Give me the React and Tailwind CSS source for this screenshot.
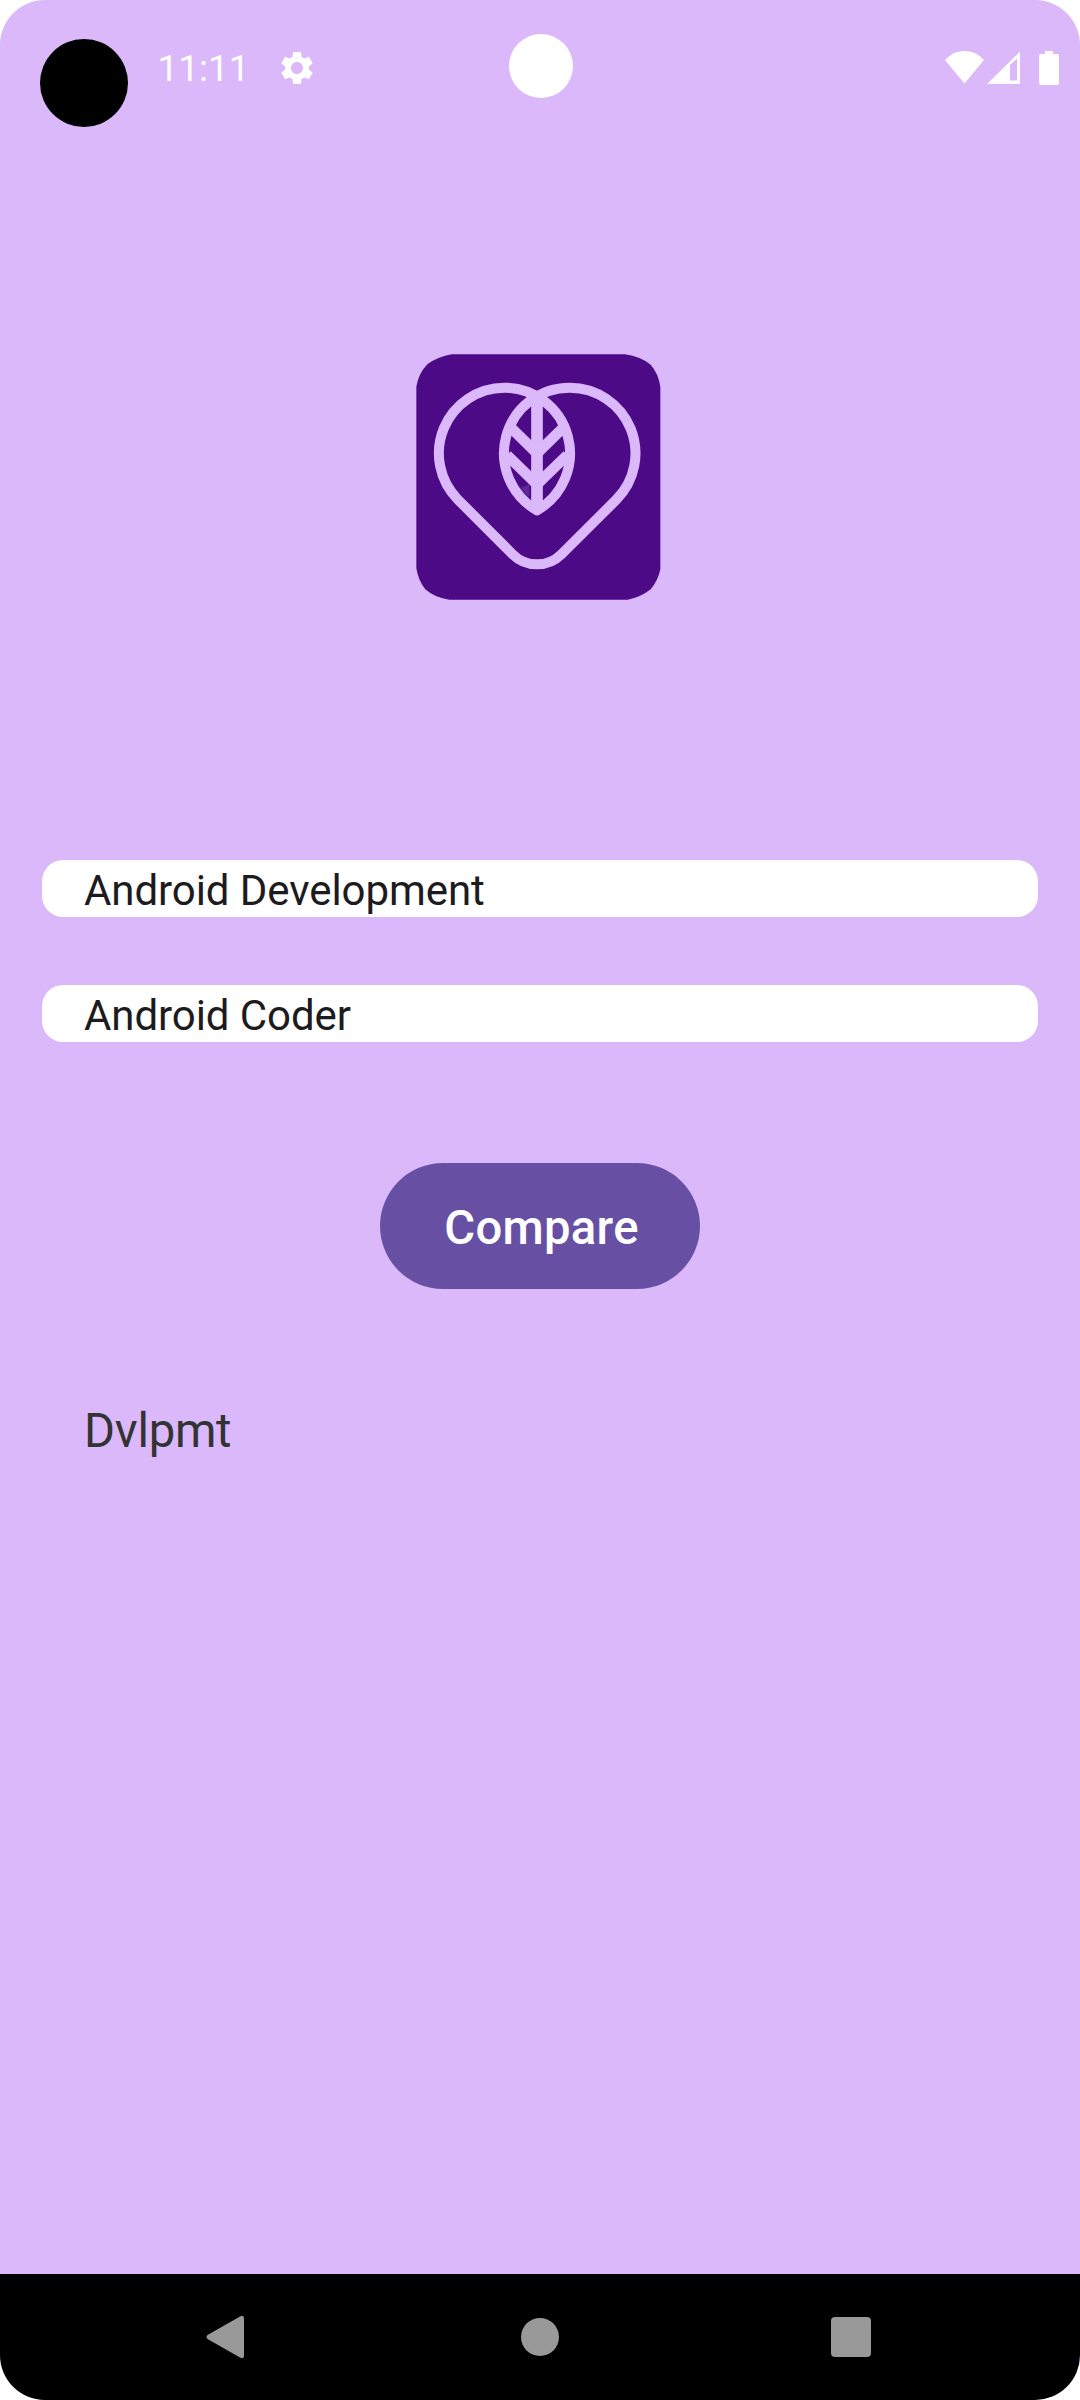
import { MdSettings } from "react-icons/md";

function StatusBar() {
  return (
    <header className="flex h-[137px] items-start text-white">
      <div className="mt-[39px] ml-[40px] size-[88px] shrink-0 rounded-full bg-black" />
      <span className="mt-[47px] ml-[29.5px] w-[88px] text-[37px] leading-[44px] whitespace-nowrap">11:11</span>
      <MdSettings className="mt-[48px] ml-[31.5px] size-[40px] shrink-0" />
      <div className="mt-[34px] ml-[192px] size-[64px] shrink-0 rounded-full bg-white" />
      <div className="mt-[51px] mr-[21px] ml-auto flex">
        <svg className="h-[34px] w-[39px]" viewBox="0 0 39 34" fill="currentColor">
          <path d="M0 9Q8 0 19.5 0T39 9L19.5 32.5Z" />
        </svg>
        <svg className="ml-[3px] h-[34px] w-[33px]" viewBox="0 0 33 34" fill="currentColor">
          <path fillRule="evenodd" d="M33 .5V33H0ZM23 14V29.5H30V7.5Z" />
        </svg>
        <svg className="ml-[19px] h-[34px] w-[20px]" viewBox="0 0 20 34" fill="currentColor">
          <path d="M6 0H14V3H18Q20 3 20 5V32Q20 34 18 34H2Q0 34 0 32V5Q0 3 2 3H6Z" />
        </svg>
      </div>
    </header>
  );
}

function Logo() {
  return (
    <svg className="h-[246px] w-[245px]" viewBox="48 42 735 738" fill="none">
      <path
        fill="#4d0a87"
        d="M155 43H675Q722 50 752 74Q775 100 781 140V688Q774 722 752 748Q722 772 683 779H148Q105 774 76 748Q55 722 49 685V140Q55 100 83 72Q115 50 155 43Z"
      />
      <path fill="#5d2794" d="M362 443L388 432V470L376 465Z" />
      <g stroke="#dab8fa" strokeWidth="30" strokeLinejoin="round">
        <path d="M411 511A197 197 0 0 0 313 143A197 197 0 0 0 174 479L337.500 642.500A104 104 0 0 0 484.500 642.500L649 479A197 197 0 0 0 510 143A197 197 0 0 0 411 511Z" />
        <path strokeWidth="35" d="M411 175V505" />
        <path strokeWidth="32" d="M325 255L411 340L498 255M321 345L411 433L502 345" />
      </g>
    </svg>
  );
}

function Field({ value }) {
  return (
    <div className="h-[57px] rounded-[21px] bg-white pt-[2px] pl-[42px] text-[42px] leading-[57px] tracking-[-0.07px] whitespace-nowrap text-[#1d1b20]">
      {value}
    </div>
  );
}

function NavBar() {
  return (
    <nav className="flex h-[126px] items-center bg-black text-[#999999]">
      <svg className="ml-[206px] h-[44px] w-[38px]" viewBox="0 0 38 44" fill="currentColor">
        <path d="M34 1.500Q38 -.5 38 3.500V40.500Q38 44.500 34 42.500L1.500 24Q-.5 22 1.500 20Z" />
      </svg>
      <div className="ml-[277px] size-[38px] rounded-full bg-[#999999]" />
      <div className="ml-[272px] size-[40px] rounded-[4px] bg-[#999999]" />
    </nav>
  );
}

export default function App() {
  return (
    <div className="h-[2400px] w-[1080px] bg-white">
      <div className="flex h-full flex-col overflow-hidden rounded-[45px] bg-[#dab8fa] font-['Roboto',sans-serif]">
        <StatusBar />
        <main className="flex flex-1 flex-col px-[42px]">
          <div className="mt-[217px] ml-[374px]">
            <Logo />
          </div>
          <div className="mt-[260px] flex flex-col gap-[68px]">
            <Field value="Android Development" />
            <Field value="Android Coder" />
          </div>
          <button className="mt-[121px] h-[126px] w-[320px] self-center rounded-full bg-[#6750a4] pt-[5px] pl-[3px] text-[47.25px] font-medium tracking-[0.3px] text-white">
            Compare
          </button>
          <p className="mt-[114px] pl-[42px] text-[47.25px] leading-[56px] tracking-[-0.25px] text-[#333333]">Dvlpmt</p>
        </main>
        <NavBar />
      </div>
    </div>
  );
}
